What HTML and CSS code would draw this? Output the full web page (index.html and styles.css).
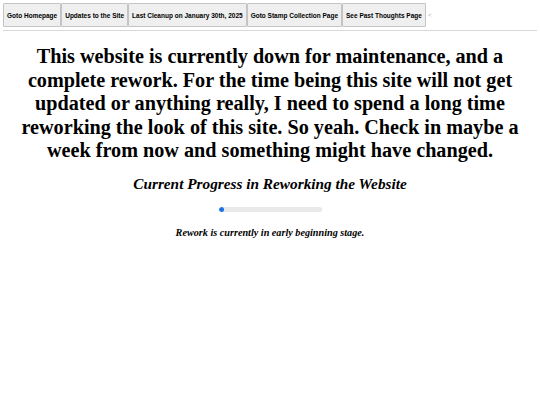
FILE: index.html
```html
<!DOCTYPE html>
<html>
<head>
<meta charset="utf-8">
<link rel="stylesheet" href="styles.css">
</head>
<body>
<nav class="nav"><button class="btn">Goto Homepage</button><button class="btn">Updates to the Site</button><button class="btn">Last Cleanup on January 30th, 2025</button><button class="btn">Goto Stamp Collection Page</button><button class="btn">See Past Thoughts Page</button><span class="lt">&lt;</span></nav>
<hr class="rule">
<h1 class="title">This website is currently down for maintenance, and a complete rework. For the time being this site will not get updated or anything really, I need to spend a long time reworking the look of this site. So yeah. Check in maybe a week from now and something might have changed.</h1>
<h2 class="sub"><em>Current Progress in Reworking the Website</em></h2>
<div class="bar"><div class="fill" style="width:5%"></div></div>
<p class="note"><em>Rework is currently in early beginning stage.</em></p>
</body>
</html>
```
FILE: styles.css
```css
html, body { margin: 0; padding: 0; background: #fff; }
body { padding: 3px; font-family: "Liberation Serif", "Times New Roman", serif; color: #000; }
.nav { display: flex; align-items: center; height: 24px; }
.btn {
  font-family: "Liberation Sans", Arial, sans-serif;
  font-weight: bold;
  font-size: 6.5px;
  height: 24px;
  padding: 0 3px;
  margin: 0;
  border: 1px solid #c4c4c4;
  background: #efefef;
  color: #000;
  border-radius: 1px;
}
.lt { font-family: "Liberation Sans", Arial, sans-serif; font-size: 6px; color: #aaa; margin-left: 2px; }
.rule { border: 0; border-top: 1px solid #d8d8d8; height: 0; margin: 3px 0 0 0; }
.title { text-align: center; font-size: 20.2px; line-height: 23.5px; font-weight: bold; margin: 14px 6px 0 6px; }
.sub { text-align: center; font-size: 15.3px; font-weight: bold; margin: 12px 0 0 0; line-height: 18px; }
.bar { width: 103px; height: 5px; background: #e9e9e9; border-radius: 3px; margin: 14px auto 0 auto; overflow: hidden; }
.fill { height: 100%; background: #1a73e8; border-radius: 3px; }
.note { text-align: center; font-size: 10.2px; font-weight: bold; margin: 15px 0 0 0; }
```
